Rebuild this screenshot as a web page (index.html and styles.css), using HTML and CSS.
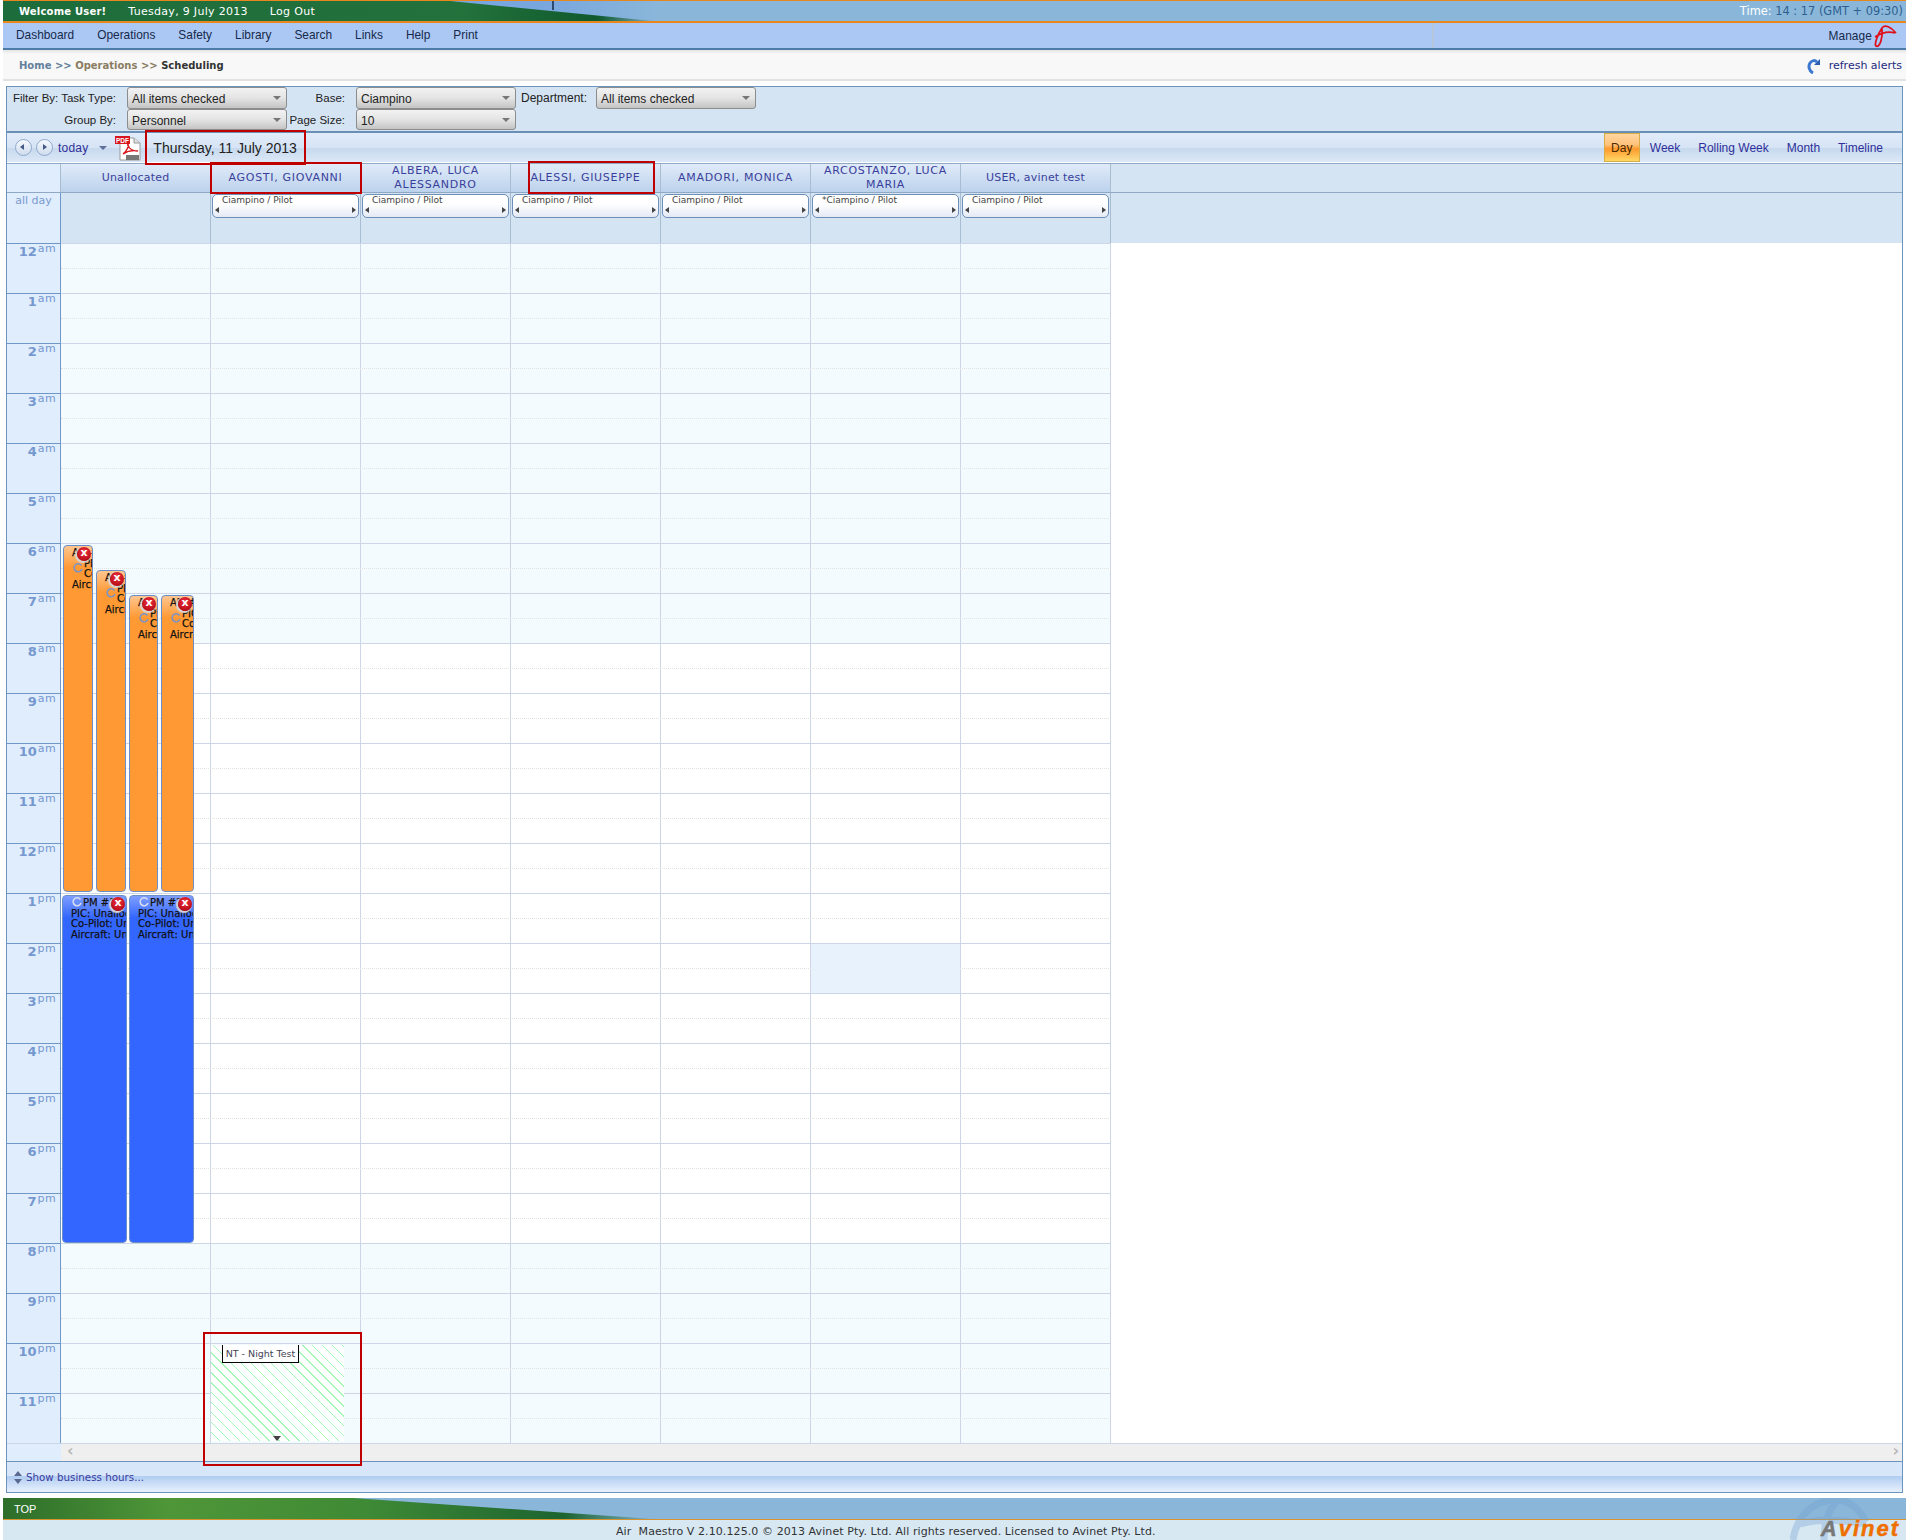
FILE: index.html
```html
<!DOCTYPE html>
<html lang="en">
<head>
  <meta charset="UTF-8">
  <title>Air Maestro - Scheduling</title>
  <link rel="stylesheet" href="styles.css">
</head>
<body>

  <div class="topbar">
    <div class="hill"></div>
    <div class="pole"></div>
    <div class="welcome">
      <b>Welcome User!</b>
      <span>Tuesday, 9 July 2013</span>
      <span>Log Out</span>
    </div>
    <div class="clock"><i>Time:</i> 14 : 17 (GMT + 09:30)</div>
  </div>

  <div class="nav">
    <div class="nav-items">
      <span>Dashboard</span><span>Operations</span><span>Safety</span><span>Library</span><span>Search</span><span>Links</span><span>Help</span><span>Print</span>
    </div>
    <div class="nav-right">
      <span>Manage</span>
      <svg class="squiggle" width="24" height="25" viewBox="0 0 24 25"><path d="M23 9C18 3 12 0 9 4C5 10 1 20 3 22C7 24 10 13 9 5M2 13C8 9 16 7 22 9" fill="none" stroke="#e0101c" stroke-width="1.8"/></svg>
    </div>
  </div>

  <div class="crumbs">
    <div><span class="c-home">Home &gt;&gt;</span> <span class="c-ops">Operations &gt;&gt;</span> <b>Scheduling</b></div>
    <div class="alerts">
      <svg width="14" height="16" viewBox="0 0 14 16"><path d="M6 15C2 13 1 8 3 5C5 2 8 2 10 4" fill="none" stroke="#3d78d0" stroke-width="3"/><path d="M7 7L13 1L13 7Z" fill="#2a5fb0"/></svg>
      <span>refresh alerts</span>
    </div>
  </div>

  <div class="panel">
    <div class="filters">
      <label>Filter By: Task Type:</label><div class="select">All items checked</div>
      <label>Base:</label><div class="select">Ciampino</div>
      <label class="dept">Department:</label><div class="select">All items checked</div>
      <label>Group By:</label><div class="select">Personnel</div>
      <label>Page Size:</label><div class="select">10</div>
    </div>

    <div class="toolbar">
      <span class="round prev"></span>
      <span class="round next"></span>
      <span class="today">today</span>
      <span class="caret"></span>
      <svg class="pdf" width="26" height="26" viewBox="0 0 26 26">
        <path d="M5 3H19L25 8V25H5Z" fill="#fff" stroke="#9a9a9a"/>
        <path d="M19 3V8H25" fill="#ddd" stroke="#9a9a9a"/>
        <rect x="0" y="1" width="15" height="8" fill="#d8141c"/>
        <text x="7.5" y="7.5" class="pdf-t">PDF</text>
        <path d="M8 19C12 16 14 11 13 8C12 11 15 16 23 16C17 15 11 17 8 19Z" fill="none" stroke="#d8141c" stroke-width="1.4"/>
        <rect x="11" y="20" width="13" height="5" fill="#777"/>
      </svg>
      <span class="date">Thursday, 11 July 2013</span>
      <div class="views">
        <span class="on">Day</span><span>Week</span><span>Rolling Week</span><span>Month</span><span>Timeline</span>
      </div>
    </div>

    <div class="heads">
      <div class="corner"></div>
      <div class="head">Unallocated</div>
      <div class="head caps">AGOSTI, GIOVANNI</div>
      <div class="head caps">ALBERA, LUCA ALESSANDRO</div>
      <div class="head caps">ALESSI, GIUSEPPE</div>
      <div class="head caps">AMADORI, MONICA</div>
      <div class="head caps">ARCOSTANZO, LUCA MARIA</div>
      <div class="head">USER, avinet test</div>
    </div>

    <div class="allday">
      <div class="corner">all day</div>
      <div class="day-cell"></div>
      <div class="day-cell"><div class="res">Ciampino / Pilot</div></div>
      <div class="day-cell"><div class="res">Ciampino / Pilot</div></div>
      <div class="day-cell"><div class="res">Ciampino / Pilot</div></div>
      <div class="day-cell"><div class="res">Ciampino / Pilot</div></div>
      <div class="day-cell"><div class="res">*Ciampino / Pilot</div></div>
      <div class="day-cell"><div class="res">Ciampino / Pilot</div></div>
    </div>

    <div class="rows">
      <div class="row"><div class="t">12<sup>am</sup></div><div class="slot"></div></div>
      <div class="row"><div class="t">1<sup>am</sup></div><div class="slot"></div></div>
      <div class="row"><div class="t">2<sup>am</sup></div><div class="slot"></div></div>
      <div class="row"><div class="t">3<sup>am</sup></div><div class="slot"></div></div>
      <div class="row"><div class="t">4<sup>am</sup></div><div class="slot"></div></div>
      <div class="row"><div class="t">5<sup>am</sup></div><div class="slot"></div></div>
      <div class="row"><div class="t">6<sup>am</sup></div><div class="slot"></div></div>
      <div class="row"><div class="t">7<sup>am</sup></div><div class="slot"></div></div>
      <div class="row work"><div class="t">8<sup>am</sup></div><div class="slot"></div></div>
      <div class="row work"><div class="t">9<sup>am</sup></div><div class="slot"></div></div>
      <div class="row work"><div class="t">10<sup>am</sup></div><div class="slot"></div></div>
      <div class="row work"><div class="t">11<sup>am</sup></div><div class="slot"></div></div>
      <div class="row work"><div class="t">12<sup>pm</sup></div><div class="slot"></div></div>
      <div class="row work"><div class="t">1<sup>pm</sup></div><div class="slot"></div></div>
      <div class="row work"><div class="t">2<sup>pm</sup></div><div class="slot"></div></div>
      <div class="row work"><div class="t">3<sup>pm</sup></div><div class="slot"></div></div>
      <div class="row work"><div class="t">4<sup>pm</sup></div><div class="slot"></div></div>
      <div class="row work"><div class="t">5<sup>pm</sup></div><div class="slot"></div></div>
      <div class="row work"><div class="t">6<sup>pm</sup></div><div class="slot"></div></div>
      <div class="row work"><div class="t">7<sup>pm</sup></div><div class="slot"></div></div>
      <div class="row"><div class="t">8<sup>pm</sup></div><div class="slot"></div></div>
      <div class="row"><div class="t">9<sup>pm</sup></div><div class="slot"></div></div>
      <div class="row"><div class="t">10<sup>pm</sup></div><div class="slot"></div></div>
      <div class="row"><div class="t">11<sup>pm</sup></div><div class="slot"></div></div>

      <div class="selected-cell"></div>

      <div class="event am e1">
        <span class="del">x</span>
        <svg class="spin" width="10" height="10" viewBox="0 0 10 10"><path d="M8.5 2.5A4 4 0 1 0 9 6" fill="none" stroke="#7c93c4" stroke-width="1.6"/></svg>
        <p>AM #1</p><p class="in">PIC: Unallocated</p><p class="in">Co-Pilot: Unallocated</p><p>Aircraft: Unallocated</p>
      </div>
      <div class="event am e2">
        <span class="del">x</span>
        <svg class="spin" width="10" height="10" viewBox="0 0 10 10"><path d="M8.5 2.5A4 4 0 1 0 9 6" fill="none" stroke="#7c93c4" stroke-width="1.6"/></svg>
        <p>AM #2</p><p class="in">PIC: Unallocated</p><p class="in">Co-Pilot: Unallocated</p><p>Aircraft: Unallocated</p>
      </div>
      <div class="event am e3">
        <span class="del">x</span>
        <svg class="spin" width="10" height="10" viewBox="0 0 10 10"><path d="M8.5 2.5A4 4 0 1 0 9 6" fill="none" stroke="#7c93c4" stroke-width="1.6"/></svg>
        <p>AM #3</p><p class="in">PIC: Unallocated</p><p class="in">Co-Pilot: Unallocated</p><p>Aircraft: Unallocated</p>
      </div>
      <div class="event am e4">
        <span class="del">x</span>
        <svg class="spin" width="10" height="10" viewBox="0 0 10 10"><path d="M8.5 2.5A4 4 0 1 0 9 6" fill="none" stroke="#7c93c4" stroke-width="1.6"/></svg>
        <p>AM #4</p><p class="in">PIC: Unallocated</p><p class="in">Co-Pilot: Unallocated</p><p>Aircraft: Unallocated</p>
      </div>
      <div class="event pm e5">
        <span class="del">x</span>
        <svg class="spin" width="10" height="10" viewBox="0 0 10 10"><path d="M8.5 2.5A4 4 0 1 0 9 6" fill="none" stroke="#d5dcf0" stroke-width="1.6"/></svg>
        <p class="in">PM #1</p><p>PIC: Unallocated</p><p>Co-Pilot: Unallocated</p><p>Aircraft: Unallocated</p>
      </div>
      <div class="event pm e6">
        <span class="del">x</span>
        <svg class="spin" width="10" height="10" viewBox="0 0 10 10"><path d="M8.5 2.5A4 4 0 1 0 9 6" fill="none" stroke="#d5dcf0" stroke-width="1.6"/></svg>
        <p class="in">PM #2</p><p>PIC: Unallocated</p><p>Co-Pilot: Unallocated</p><p>Aircraft: Unallocated</p>
      </div>

      <div class="night">
        <div class="night-label">NT - Night Test</div>
        <span class="night-caret"></span>
      </div>
    </div>

    <div class="hscroll">
      <span class="track"><i>&lsaquo;</i><i>&rsaquo;</i></span>
    </div>

    <div class="hours">
      <svg width="8" height="13" viewBox="0 0 8 13"><path d="M4 0L8 5H0ZM4 13L0 8H8Z" fill="#5a6a90"/></svg>
      <span>Show business hours...</span>
    </div>
  </div>

  <div class="footbar">
    <div class="hill low"></div>
    <span class="top-link">TOP</span>
  </div>
  <div class="copyright">Air&nbsp; Maestro V 2.10.125.0 &copy; 2013 Avinet Pty. Ltd. All rights reserved. Licensed to Avinet Pty. Ltd.</div>

  <svg class="globe" width="90" height="42" viewBox="0 0 90 42"><path d="M3 42C6 20 22 2 45 2C60 2 70 12 76 24M34 42C34 26 38 10 48 3M10 26C30 20 50 22 76 26" fill="none" stroke="#6f9fcf" stroke-width="7" opacity=".35"/></svg>
  <div class="logo"><span>A</span>vinet</div>

  <!-- red review marks -->
  <div class="mark m-date"></div>
  <div class="mark m-agosti"></div>
  <div class="mark m-alessi"></div>
  <div class="mark m-night"></div>

</body>
</html>
```

FILE: styles.css
```css
html, body {
  margin: 0;
  padding: 0;
  height: 1540px;
  overflow: hidden;
  background: #fff;
}
body {
  position: relative;
  font-family: "DejaVu Sans", sans-serif;
  font-size: 10px;
  color: #222;
}
p {
  margin: 0;
}

/* top bar */
.topbar {
  position: relative;
  margin-left: 3px;
  height: 23px;
  box-sizing: border-box;
  border-top: 1px solid #e8871e;
  border-bottom: 2px solid #e8871e;
  background: linear-gradient(90deg, #78a6de 0, #78a6de 540px, #8ab7d9 660px);
  display: flex;
  justify-content: space-between;
  align-items: center;
  color: #fff;
}
.hill {
  position: absolute;
  left: 0;
  top: 0;
  bottom: 0;
  width: 660px;
  background: linear-gradient(90deg, #1d6d3c 0, #23713b 70%, #0f5a2e 90%, #8ab7d9 100%);
  clip-path: polygon(0 0, 447px 0, 650px 100%, 0 100%);
}
.hill.low {
  background: linear-gradient(90deg, #2d6e2a 0, #4f9638 25%, #3f8a35 55%, #1c6430 85%, #8ab7d9 100%);
  clip-path: polygon(0 0, 350px 0, 650px 100%, 0 100%);
}
.pole {
  position: absolute;
  left: 549px;
  top: 0;
  width: 2px;
  height: 9px;
  background: #2c4a70;
}
.welcome {
  position: relative;
  display: flex;
  gap: 22px;
  padding: 1px 0 0 16px;
  font-size: 11px;
  letter-spacing: .3px;
}
.welcome b {
  font-size: 10px;
  letter-spacing: .2px;
  line-height: 13px;
}
.clock {
  position: relative;
  padding-right: 3px;
  color: #2f5f8f;
  font-size: 11.4px;
}
.clock i {
  font-style: normal;
  color: #fff;
}

/* nav */
.nav {
  margin-left: 3px;
  height: 27px;
  box-sizing: border-box;
  background: #abc8f5;
  border-bottom: 2px solid #4d7cab;
  display: flex;
  justify-content: space-between;
  font-family: "Liberation Sans", sans-serif;
  font-size: 11.9px;
  color: #16294a;
}
.nav-items {
  display: flex;
  gap: 23px;
  padding-left: 13px;
  line-height: 25px;
}
.nav-right {
  width: 474px;
  box-sizing: border-box;
  border-left: 2px solid #b6c6dc;
  display: flex;
  justify-content: flex-end;
  line-height: 27px;
  padding-right: 9px;
  gap: 1px;
  letter-spacing: .1px;
}
.squiggle {
  margin-top: 1px;
}

/* breadcrumbs */
.crumbs {
  margin-left: 3px;
  height: 31px;
  box-sizing: border-box;
  background: linear-gradient(#e4e4e4 0, #f8f8f8 4px);
  border-bottom: 2px solid #e2e2e2;
  display: flex;
  justify-content: space-between;
  align-items: center;
  padding: 2px 4px 0 16px;
  font-weight: bold;
}
.c-home {
  color: #64809c;
}
.c-ops {
  color: #8a7c62;
}
.crumbs b {
  color: #333;
}
.alerts {
  display: flex;
  align-items: center;
  gap: 8px;
  font-weight: normal;
  font-size: 11px;
  color: #232a80;
}

/* main panel */
.panel {
  margin: 5px 3px 0 6px;
  height: 1407px;
  box-sizing: border-box;
  border: 1px solid #6b93bb;
}
.filters {
  height: 44px;
  background: #d5e4f3;
  border-bottom: 2px solid #6a90b8;
  display: grid;
  grid-template-columns: 120px 160px 69px 160px 80px 160px;
  grid-auto-rows: 21.5px;
  font-family: "Liberation Sans", sans-serif;
  font-size: 12px;
}
.filters label {
  text-align: right;
  padding: 1px 11px 0 0;
  line-height: 20px;
  font-size: 11.5px;
}
.filters label.dept {
  padding-right: 9px;
  font-size: 12px;
}
.select {
  position: relative;
  box-sizing: border-box;
  border: 1px solid #8d8d8d;
  border-radius: 3px;
  background: linear-gradient(#f2f2f2, #e4e4e4 50%, #c4c4c4);
  padding: 1px 0 0 4px;
  line-height: 20px;
}
.select::after {
  content: "";
  position: absolute;
  right: 5px;
  top: 8px;
  border: 4px solid transparent;
  border-top: 4px solid #777;
}

/* toolbar */
.toolbar {
  height: 30px;
  box-sizing: border-box;
  background: linear-gradient(#e2ecfa, #d6e4f5 50%, #c6d8ed 50%, #dbe8f7);
  border-bottom: 1px solid #fff;
  display: flex;
  align-items: center;
  font-family: "Liberation Sans", sans-serif;
  font-size: 12px;
  color: #2e2f9a;
}
.round {
  position: relative;
  width: 15px;
  height: 15px;
  margin-left: 4px;
  border: 1px solid #8fa9cc;
  border-radius: 50%;
  background: linear-gradient(#f6f9fd, #cfdcee);
}
.round.prev {
  margin-left: 8px;
}
.round::after {
  content: "";
  position: absolute;
  top: 4px;
  border: 3.5px solid transparent;
}
.prev::after {
  left: 1px;
  border-right: 4px solid #445a85;
}
.next::after {
  left: 6px;
  border-left: 4px solid #445a85;
}
.today {
  margin-left: 5px;
  letter-spacing: .2px;
}
.caret {
  margin: 4px 0 0 11px;
  border: 4px solid transparent;
  border-top: 4px solid #5f6f9a;
}
.pdf {
  margin-left: 8px;
}
.pdf-t {
  font-family: "Liberation Sans", sans-serif;
  font-size: 6.5px;
  font-weight: bold;
  fill: #fff;
  text-anchor: middle;
}
.date {
  margin-left: 12px;
  font-size: 14px;
  color: #222;
}
.views {
  margin-left: auto;
  align-self: stretch;
  display: flex;
  gap: 18px;
  padding-right: 19px;
  line-height: 31px;
}
.views .on {
  width: 36px;
  box-sizing: border-box;
  margin-right: -8px;
  text-align: center;
  color: #4a2a00;
  border: 1px solid #d9ad45;
  line-height: 29px;
  background: linear-gradient(#ffd6a2, #ffc27a 40%, #ff9a2e 55%, #ffd966);
}

/* column headers */
.heads, .allday {
  display: flex;
  background: #d5e4f3;
  border-top: 1px solid #8fa9c4;
}
.heads {
  height: 28px;
}
.allday {
  height: 50px;
}
.corner {
  width: 53px;
  flex: none;
  background: #e0edfd;
  border-right: 1px solid #6f98c9;
  color: #7b9bd0;
  font-size: 11px;
  text-align: center;
  padding-top: 1px;
}
.heads .corner {
  border-right-color: #a9bdd2;
}
.head {
  width: 150px;
  flex: none;
  box-sizing: border-box;
  border-right: 1px solid #a9bdd2;
  background: linear-gradient(#e0ebf9, #bcd2ec);
  color: #3a3f9c;
  font-size: 11px;
  letter-spacing: .2px;
  line-height: 14px;
  text-align: center;
  display: flex;
  align-items: center;
  justify-content: center;
  padding: 0 12px;
}
.head.caps {
  letter-spacing: .7px;
}
.day-cell {
  width: 149px;
  flex: none;
  border-right: 1px solid #a9bdd2;
}
.res {
  position: relative;
  margin: 1px 1px 0 1px;
  height: 24px;
  box-sizing: border-box;
  border: 1px solid #6d8fb8;
  border-radius: 5px;
  background: linear-gradient(#fff, #fff 40%, #e4e9f5);
  font-size: 9px;
  line-height: 10px;
  padding-left: 9px;
  color: #444;
}
.res::before, .res::after {
  content: "";
  position: absolute;
  top: 12px;
  border: 3.5px solid transparent;
}
.res::before {
  left: -1px;
  border-right: 4px solid #444;
}
.res::after {
  right: -1px;
  border-left: 4px solid #444;
}

/* time grid */
.rows {
  position: relative;
  border-bottom: 1px solid #ccd6e6;
}
.row {
  display: flex;
  height: 50px;
}
.t {
  width: 53px;
  height: 49px;
  flex: none;
  background: #e0edfd;
  border-top: 1px solid #6f98c9;
  border-right: 1px solid #6f98c9;
  text-align: right;
  color: #7598cf;
  font-size: 13px;
  font-weight: bold;
  line-height: 15px;
}
.t sup {
  font-size: 11px;
  font-weight: normal;
  letter-spacing: .4px;
  line-height: 0;
  vertical-align: 4px;
  margin: 0 4px 0 1px;
}
.slot {
  position: relative;
  width: 1050px;
  height: 49px;
  flex: none;
  border-top: 1px solid #ccd6e6;
  background: repeating-linear-gradient(90deg, #f4fbff 0, #f4fbff 149px, #ccd6e6 149px, #ccd6e6 150px);
}
.row.work .slot {
  background: repeating-linear-gradient(90deg, #fff 0, #fff 149px, #ccd6e6 149px, #ccd6e6 150px);
}
.slot::after {
  content: "";
  position: absolute;
  left: 0;
  right: 0;
  top: 24px;
  border-top: 1px dotted #e2e2e2;
}
.selected-cell {
  position: absolute;
  left: 804px;
  top: 701px;
  width: 149px;
  height: 49px;
  background: #e8f2fd;
}

/* events */
.event {
  position: absolute;
  box-sizing: border-box;
  border: 1px solid #6a8fc8;
  border-radius: 4px;
  overflow: hidden;
  font-size: 10px;
  line-height: 10.7px;
  color: #111;
  white-space: nowrap;
  padding: 2px 0 0 8px;
  -webkit-text-stroke: .25px #111;
}
.event.am {
  background: linear-gradient(#ffc690, #ff9933 22px);
}
.event.pm {
  top: 652px;
  height: 348px;
  width: 65px;
  background: linear-gradient(#7f9eff, #3366ff 22px);
}
.e1 {
  left: 56px;
  width: 30px;
  top: 302px;
  height: 347px;
}
.e2 {
  left: 89px;
  width: 30px;
  top: 327px;
  height: 322px;
}
.e3 {
  left: 122px;
  width: 29px;
  top: 352px;
  height: 297px;
}
.e4 {
  left: 154px;
  width: 33px;
  top: 352px;
  height: 297px;
}
.e5 {
  left: 55px;
}
.e6 {
  left: 122px;
}
.event .in {
  padding-left: 12px;
}
.del {
  position: absolute;
  right: 1px;
  top: 1px;
  width: 14px;
  height: 14px;
  border-radius: 50%;
  background: radial-gradient(circle at 50% 35%, #f0323c, #a5000e);
  box-shadow: -1px 1px 1px 1px #d6d6d6;
  color: #fff;
  -webkit-text-stroke: 0;
  font: bold 11px/12px "DejaVu Sans", sans-serif;
  text-align: center;
}
.spin {
  position: absolute;
  left: 9px;
  top: 17px;
}
.pm .spin {
  top: 1px;
}

/* night test block */
.night {
  position: absolute;
  left: 204px;
  top: 1102px;
  width: 133px;
  height: 96px;
  background: repeating-linear-gradient(45deg, #fff 0, #fff 6px, #a5f7b8 6px, #a5f7b8 7px);
}
.night-label {
  position: absolute;
  left: 11px;
  top: 0;
  width: 77px;
  height: 18px;
  box-sizing: border-box;
  border: 1px solid #000;
  border-top: none;
  background: #fff;
  font-size: 9.5px;
  line-height: 18px;
  color: #445;
  text-align: center;
}
.night-caret {
  position: absolute;
  left: 62px;
  bottom: -4px;
  border: 4px solid transparent;
  border-top: 5px solid #444;
}

/* bottom of panel */
.hscroll {
  height: 17px;
  background: #e0edfd;
  padding-left: 54px;
}
.track {
  display: flex;
  justify-content: space-between;
  height: 17px;
  background: #efefef;
  padding: 0 3px 0 6px;
  color: #b8b8b8;
  font: bold 16px/14px "DejaVu Sans", sans-serif;
}
.track i {
  font-style: normal;
}
.hours {
  height: 31px;
  box-sizing: border-box;
  border-top: 1px solid #6b93bb;
  background: linear-gradient(#d7e6f9 0, #d7e6f9 14px, #b0ccf2 14px, #e8f1fc);
  display: flex;
  align-items: center;
  gap: 4px;
  padding-left: 7px;
  font-size: 10.3px;
  color: #3a3aa0;
}

/* footer */
.footbar {
  position: relative;
  margin: 5px 0 0 3px;
  height: 22px;
  box-sizing: border-box;
  border-bottom: 1px solid #d9932e;
  background: #8ab7d9;
  font-family: "Liberation Sans", sans-serif;
  font-size: 11px;
  color: #fff;
  line-height: 22px;
}
.top-link {
  position: relative;
  padding-left: 11px;
}
.copyright {
  margin-left: 3px;
  height: 20px;
  background: #d7e8f3;
  padding-left: 613px;
  line-height: 23px;
  font-size: 11px;
  letter-spacing: .09px;
  color: #333;
}
.globe {
  position: absolute;
  left: 1790px;
  top: 1498px;
}
.logo {
  position: absolute;
  right: 6px;
  bottom: 2px;
  font: italic bold 22px/18px "Liberation Sans", sans-serif;
  letter-spacing: 2px;
  -webkit-text-stroke: .5px #ee6f00;
  color: #ee6f00;
}
.logo span {
  color: #777;
  -webkit-text-stroke: .5px #777;
}

/* red boxes */
.mark {
  position: absolute;
  box-sizing: border-box;
  border: 2px solid #c00000;
}
.m-date {
  left: 145px;
  top: 130px;
  width: 161px;
  height: 35px;
}
.m-agosti {
  left: 210px;
  top: 162px;
  width: 152px;
  height: 32px;
}
.m-alessi {
  left: 528px;
  top: 161px;
  width: 127px;
  height: 33px;
}
.m-night {
  left: 203px;
  top: 1332px;
  width: 159px;
  height: 134px;
}
```
